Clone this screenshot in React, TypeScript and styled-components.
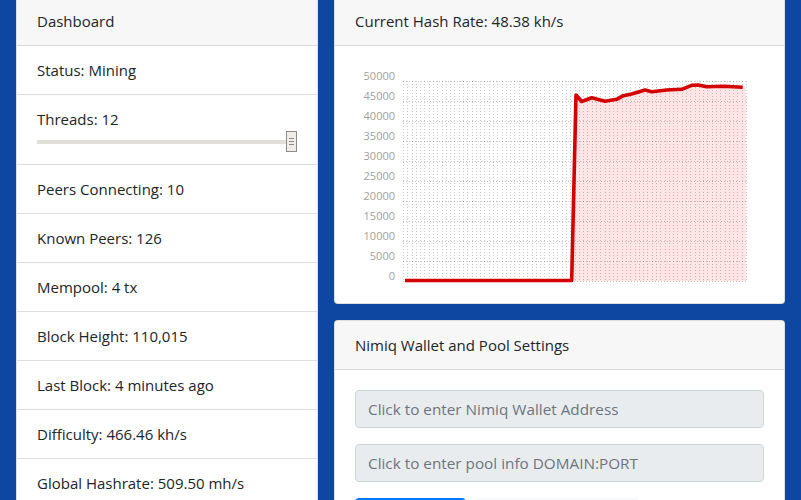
import React from 'react';
import styled, { createGlobalStyle } from 'styled-components';

const GlobalStyle = createGlobalStyle`
  html, body {
    margin: 0;
    padding: 0;
    overflow: hidden;
    background-color: #0d47a1;
  }
  body {
    font-family: 'Open Sans', 'Noto Sans', sans-serif;
    font-size: 15px;
    line-height: 24px;
    color: #212529;
  }
  * {
    box-sizing: border-box;
  }
`;

const Page = styled.div`
  display: grid;
  grid-template-columns: 302px 451px;
  gap: 16px;
  padding: 0 16px;
  margin-top: -4px;
  align-items: start;
`;

const Column = styled.div`
  display: flex;
  flex-direction: column;
  gap: 16px;
`;

const Card = styled.div`
  background: #fff;
  border: 1px solid rgba(0, 0, 0, 0.125);
  border-radius: 4px;
  overflow: hidden;
`;

const CardHeader = styled.div`
  padding: 12px 20px;
  background-color: #f7f7f7;
  border-bottom: 1px solid rgba(0, 0, 0, 0.125);
`;

const CardBody = styled.div`
  padding: 20px;
`;

const ListItem = styled.div`
  padding: 12px 20px;
  border-bottom: 1px solid rgba(0, 0, 0, 0.125);

  &:last-child {
    border-bottom: none;
  }
`;

const Slider = styled.div`
  display: flex;
  align-items: center;
  height: 21px;
`;

const SliderTrack = styled.div`
  flex: 1;
  height: 4px;
  background-color: #e2ded8;
`;

const SliderThumb = styled.div`
  width: 11px;
  height: 21px;
  border: 1px solid #8a8a8a;
  background-color: #efedea;
  display: flex;
  flex-direction: column;
  align-items: center;
  justify-content: center;
  gap: 2px;
`;

const ThumbGrip = styled.span`
  display: block;
  width: 5px;
  height: 1px;
  background-color: #8a8a8a;
`;

const Field = styled.input`
  display: block;
  width: 100%;
  height: 38px;
  padding: 6px 12px;
  margin-bottom: 16px;
  font-family: inherit;
  font-size: 15.3px;
  color: #495057;
  background-color: #e9ecef;
  border: 1px solid #ced4da;
  border-radius: 4px;
  outline: none;

  &::placeholder {
    color: #6c757d;
  }
`;

const ButtonRow = styled.div`
  display: flex;
  gap: 7px;
`;

const Button = styled.button<{ $variant: 'primary' | 'light' }>`
  height: 38px;
  padding: 6px 12px;
  font-family: inherit;
  font-size: 15px;
  border-radius: 4px;
  border: 1px solid ${({ $variant }) => ($variant === 'primary' ? '#007bff' : '#f8f9fa')};
  background-color: ${({ $variant }) => ($variant === 'primary' ? '#007bff' : '#f8f9fa')};
  color: ${({ $variant }) => ($variant === 'primary' ? '#fff' : '#212529')};
`;

const ChartSvg = styled.svg`
  display: block;
  width: 409px;
  height: 217px;
`;

const stats = [
  'Status: Mining',
  null,
  'Peers Connecting: 10',
  'Known Peers: 126',
  'Mempool: 4 tx',
  'Block Height: 110,015',
  'Last Block: 4 minutes ago',
  'Difficulty: 466.46 kh/s',
  'Global Hashrate: 509.50 mh/s',
];

// hash rate samples, already in chart pixels
const linePoints: [number, number][] = [
  [50, 214.5],
  [216.7, 214.5],
  [221, 29],
  [226.7, 35.5],
  [236.7, 31.7],
  [250, 35.3],
  [261.7, 33.3],
  [268.3, 29.7],
  [276.7, 28],
  [290, 24],
  [296.7, 25.7],
  [311.7, 24],
  [326.7, 23.3],
  [336.7, 19.3],
  [343.3, 19],
  [351.7, 20.7],
  [368.3, 20.3],
  [387.7, 21.3],
];

const PLOT_LEFT = 48;
const PLOT_RIGHT = 391;
const PLOT_TOP = 15;
const PLOT_BOTTOM = 215;

const HashChart: React.FC = () => {
  const ticks = Array.from({ length: 11 }, (_, i) => 50000 - i * 5000);
  const vCount = 80;
  const vStep = (PLOT_RIGHT - PLOT_LEFT) / vCount;
  const line = linePoints.map(([x, y]) => `${x},${y}`).join(' ');
  const fill = `216.7,${PLOT_BOTTOM} ${linePoints
    .slice(2)
    .map(([x, y]) => `${x},${y}`)
    .join(' ')} ${PLOT_RIGHT},21.3 ${PLOT_RIGHT},${PLOT_BOTTOM}`;

  return (
    <ChartSvg viewBox="0 0 409 217">
      <polygon points={fill} fill="rgba(255, 0, 0, 0.1)" />
      {ticks.map((t, i) => (
        <line
          key={`h${t}`}
          x1={PLOT_LEFT}
          x2={PLOT_RIGHT}
          y1={PLOT_TOP + i * 20 + 0.5}
          y2={PLOT_TOP + i * 20 + 0.5}
          stroke="rgba(0,0,0,0.22)"
          strokeDasharray="1 2"
        />
      ))}
      {Array.from({ length: vCount + 1 }, (_, i) => (
        <line
          key={`v${i}`}
          x1={Math.round(PLOT_LEFT + i * vStep) + 0.5}
          x2={Math.round(PLOT_LEFT + i * vStep) + 0.5}
          y1={PLOT_TOP}
          y2={PLOT_BOTTOM}
          stroke="rgba(0,0,0,0.2)"
          strokeDasharray="1 2"
        />
      ))}
      {ticks.map((t, i) => (
        <text
          key={`l${t}`}
          x={40}
          y={PLOT_TOP + i * 20 - 1}
          textAnchor="end"
          fontSize="11"
          fontFamily="'Open Sans', sans-serif"
          fill="#a0a0a0"
        >
          {t}
        </text>
      ))}
      <polyline
        points={line}
        fill="none"
        stroke="#d40000"
        strokeWidth="3.6"
        strokeLinejoin="round"
      />
    </ChartSvg>
  );
};

export default function App() {
  return (
    <>
      <GlobalStyle />
      <Page>
        <Card>
          <CardHeader>Dashboard</CardHeader>
          {stats.map((s, i) =>
            s === null ? (
              <ListItem key={i}>
                Threads: 12
                <Slider>
                  <SliderTrack />
                  <SliderThumb>
                    <ThumbGrip />
                    <ThumbGrip />
                    <ThumbGrip />
                  </SliderThumb>
                </Slider>
              </ListItem>
            ) : (
              <ListItem key={i}>{s}</ListItem>
            )
          )}
        </Card>
        <Column>
          <Card>
            <CardHeader>Current Hash Rate: 48.38 kh/s</CardHeader>
            <CardBody>
              <HashChart />
            </CardBody>
          </Card>
          <Card>
            <CardHeader>Nimiq Wallet and Pool Settings</CardHeader>
            <CardBody>
              <Field readOnly placeholder="Click to enter Nimiq Wallet Address" />
              <Field readOnly placeholder="Click to enter pool info DOMAIN:PORT" />
              <ButtonRow>
                <Button $variant="primary">Start Mining</Button>
                <Button $variant="light">Clear Saved Settings</Button>
              </ButtonRow>
            </CardBody>
          </Card>
        </Column>
      </Page>
    </>
  );
}
